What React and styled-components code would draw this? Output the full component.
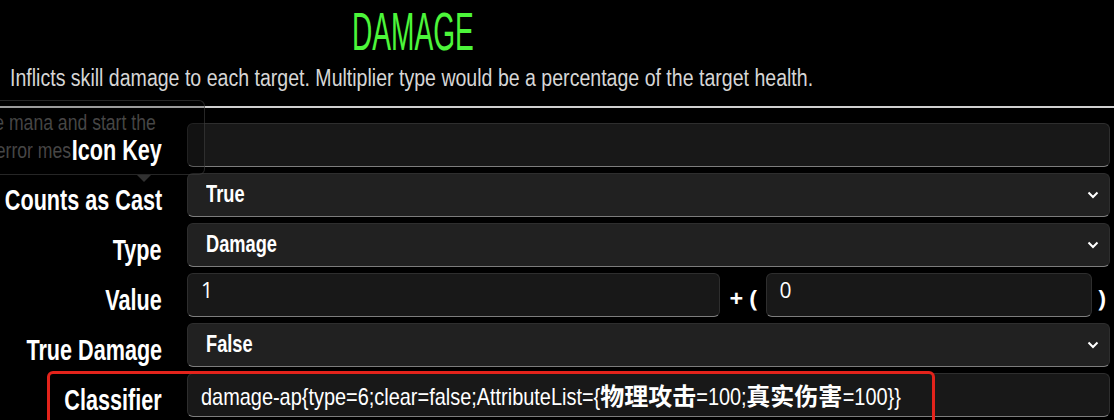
import React from "react";
import styled, { createGlobalStyle } from "styled-components";

const SANS = `"Liberation Sans", Arial, sans-serif`;
const CJK = `"Noto Sans CJK SC", sans-serif`;

const Global = createGlobalStyle`
  html, body { margin: 0; padding: 0; background: #000; }
  body { width: 1114px; height: 420px; overflow: hidden; font-family: ${SANS}; color: #fff; }
`;

/* Liberation Sans compressed horizontally to match the narrow face of the reference */
const Narrow = styled.span`
  display: inline-block;
  white-space: nowrap;
  transform: scaleX(${(p) => p.$scale || 0.8});
  transform-origin: ${(p) => p.$origin || "left"} center;
`;

const Page = styled.div`
  position: relative;
  width: 1114px;
  height: 420px;
  overflow: hidden;
  background: #000;
`;

const Header = styled.header`
  width: 826px;
  display: flex;
  flex-direction: column;
  align-items: center;
`;

const Title = styled.h1`
  margin: 4px 0 0;
  font-family: ${SANS};
  font-weight: 400;
  font-size: 53px;
  line-height: 56px;
  color: #4cf63a;
`;

const Description = styled.p`
  margin: 0;
  padding: 4px 0 0 10px;
  font-size: 23px;
  line-height: 28px;
  color: #d6d6d6;
`;

const Divider = styled.hr`
  margin: 14px 0 0;
  border: 0;
  border-top: 2px solid #cfcfcf;
  height: 0;
`;

const Form = styled.div`
  display: grid;
  grid-template-columns: 162px 1fr;
  column-gap: 25px;
  row-gap: 6px;
  padding: 15px 4px 0 0;
`;

const Label = styled.label`
  position: relative;
  z-index: 2;
  align-self: end;
  display: flex;
  justify-content: flex-end;
  font-weight: 700;
  font-size: 29px;
  line-height: 34px;
  color: #fff;
  white-space: nowrap;
  margin-bottom: 0;
`;

const fieldBase = `
  box-sizing: border-box;
  height: 44px;
  border: 1px solid #2e2e2e;
  border-bottom-color: #7d7d7d;
  border-radius: 6px;
  color: #fff;
`;

const TextField = styled.div`
  ${fieldBase}
  flex: ${(p) => p.$grow || 1} 1 0;
  min-width: 0;
  background: #181818;
  padding: ${(p) => (p.$numeric ? "3px 0 0 13px" : "8px 0 0 13px")};
  font-family: ${(p) => (p.$numeric ? `"Open Sans", "DejaVu Sans", sans-serif` : SANS)};
  font-size: ${(p) => (p.$numeric ? "21px" : "24px")};
  line-height: 26px;
  white-space: nowrap;
  overflow: hidden;
`;

const CjkRun = styled.span`
  display: inline-block;
  font-family: ${CJK};
  font-weight: 700;
  font-size: 24px;
  transform: scaleX(1.205);
  transform-origin: left center;
  margin-right: 19.7px;
`;

const SelectBox = styled.div`
  ${fieldBase}
  background: #212121;
  display: flex;
  align-items: center;
  justify-content: space-between;
  padding: 0 10px 2px 18px;
  font-weight: 700;
  font-size: 24px;
`;

const Chevron = styled.svg`
  width: 12px;
  height: 8px;
  margin-top: 2px;
  flex: none;
`;

const ValueRow = styled.div`
  display: flex;
  align-items: center;
`;

const Sep = styled.span`
  font-family: "Open Sans", "DejaVu Sans", sans-serif;
  font-weight: 700;
  font-size: 24px;
  color: #fff;
  padding: ${(p) => p.$pad};
  align-self: flex-end;
  line-height: 38px;
  white-space: nowrap;
`;

const Tooltip = styled.div`
  position: absolute;
  left: -150px;
  top: 100px;
  width: 355px;
  height: 75px;
  box-sizing: border-box;
  border: 1px solid rgba(70, 70, 70, 0.55);
  border-radius: 6px;
  background: rgba(0, 0, 0, 0.25);
  z-index: 1;
  padding-top: 8px;
  font-size: 22px;
  line-height: 28px;
  color: rgba(255, 255, 255, 0.28);
  &::after {
    content: "";
    position: absolute;
    left: 286px;
    bottom: -8px;
    border-left: 7px solid transparent;
    border-right: 7px solid transparent;
    border-top: 7px solid rgba(70, 70, 70, 0.7);
  }
`;

const TipLine = styled.div`
  display: flex;
  justify-content: flex-end;
  padding-right: ${(p) => p.$end}px;
  white-space: nowrap;
`;

const Highlight = styled.div`
  position: absolute;
  left: 47px;
  top: 371px;
  width: 888px;
  height: 60px;
  box-sizing: border-box;
  border: 3px solid #e3231b;
  border-radius: 6px;
  pointer-events: none;
  z-index: 3;
`;

function Select({ value }) {
  return (
    <SelectBox>
      <Narrow $scale={0.76}>{value}</Narrow>
      <Chevron viewBox="0 0 12 8">
        <path d="M1.5 1.5 L6 6 L10.5 1.5" fill="none" stroke="#fff" strokeWidth="2" />
      </Chevron>
    </SelectBox>
  );
}

function FieldLabel({ children }) {
  return (
    <Label>
      <Narrow $scale={0.745} $origin="right">{children}</Narrow>
    </Label>
  );
}

export default function App() {
  return (
    <Page>
      <Global />
      <Header>
        <Title>
          <Narrow $scale={0.53} $origin="center">DAMAGE</Narrow>
        </Title>
      </Header>
      <Description>
        <Narrow $scale={0.85}>
          Inflicts skill damage to each target. Multiplier type would be a percentage of the target health.
        </Narrow>
      </Description>
      <Divider />
      <Form>
        <FieldLabel>Icon Key</FieldLabel>
        <TextField />
        <FieldLabel>Counts as Cast</FieldLabel>
        <Select value="True" />
        <FieldLabel>Type</FieldLabel>
        <Select value="Damage" />
        <FieldLabel>Value</FieldLabel>
        <ValueRow>
          <TextField $numeric $grow={537}>1</TextField>
          <Sep $pad="0 8px 0 10px">+ (</Sep>
          <TextField $numeric $grow={323}>0</TextField>
          <Sep $pad="0 4px 0 6px">)</Sep>
        </ValueRow>
        <FieldLabel>True Damage</FieldLabel>
        <Select value="False" />
        <FieldLabel>Classifier</FieldLabel>
        <TextField>
          <Narrow $scale={0.83}>
            damage-ap{"{"}type=6;clear=false;AttributeList={"{"}
            <CjkRun>物理攻击</CjkRun>=100;<CjkRun>真实伤害</CjkRun>=100{"}}"}
          </Narrow>
        </TextField>
      </Form>
      <Tooltip>
        <TipLine $end={48}>
          <Narrow $scale={0.8} $origin="right">Consume mana and start the</Narrow>
        </TipLine>
        <TipLine $end={133}>
          <Narrow $scale={0.8} $origin="right">error mes</Narrow>
        </TipLine>
      </Tooltip>
      <Highlight />
    </Page>
  );
}
